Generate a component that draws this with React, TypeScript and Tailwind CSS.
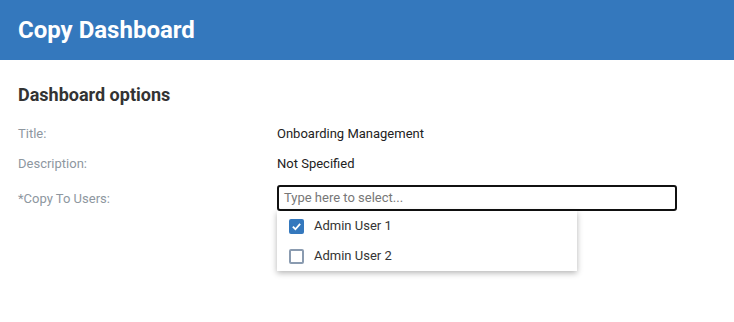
import React from "react";

export default function App() {
  return (
    <div className="w-[734px] h-[322px] bg-white overflow-hidden" style={{ fontFamily: "Roboto, 'Liberation Sans', sans-serif" }}>
      <div className="h-[60px] bg-[#3478bd] flex items-center px-[18px]">
        <h1 className="text-white text-[24px] font-bold leading-none">Copy Dashboard</h1>
      </div>
      <div className="px-[18px] pt-[24px]">
        <h2 className="text-[#333333] text-[18px] font-bold leading-[22px]">Dashboard options</h2>
        <div className="mt-[13px] flex flex-col">
          <div className="flex h-[30px] items-center">
            <div className="w-[259px] text-[13px] text-[#8e979f]">Title:</div>
            <div className="text-[13px] text-[#222]">Onboarding Management</div>
          </div>
          <div className="flex h-[30px] items-center">
            <div className="w-[259px] text-[13px] text-[#8e979f]">Description:</div>
            <div className="text-[13px] text-[#222]">Not Specified</div>
          </div>
          <div className="flex mt-[6px]">
            <div className="w-[259px] text-[13px] text-[#8e979f] pt-[4px]">*Copy To Users:</div>
            <div className="relative">
              <div className="w-[400px] h-[26px] border-2 border-[#111] rounded-[3px] flex items-center px-[5px]">
                <span className="text-[13px] text-[#777]">Type here to select...</span>
              </div>
              <div className="absolute left-0 top-[26px] w-[300px] bg-white shadow-[0_2px_6px_rgba(0,0,0,0.3)]">
                <div className="flex items-center h-[30px] pl-[12px]">
                  <div className="w-[15px] h-[15px] rounded-[2px] bg-[#3478bd] flex items-center justify-center">
                    <svg width="11" height="11" viewBox="0 0 12 12">
                      <path d="M2 6.2 L4.8 9 L10 3.2" stroke="white" strokeWidth="2" fill="none" />
                    </svg>
                  </div>
                  <span className="ml-[10px] text-[13px] text-[#333]">Admin User 1</span>
                </div>
                <div className="flex items-center h-[30px] pl-[12px]">
                  <div className="w-[15px] h-[15px] rounded-[2px] border-2 border-[#8a9bb0] bg-white" />
                  <span className="ml-[10px] text-[13px] text-[#333]">Admin User 2</span>
                </div>
              </div>
            </div>
          </div>
        </div>
      </div>
    </div>
  );
}
